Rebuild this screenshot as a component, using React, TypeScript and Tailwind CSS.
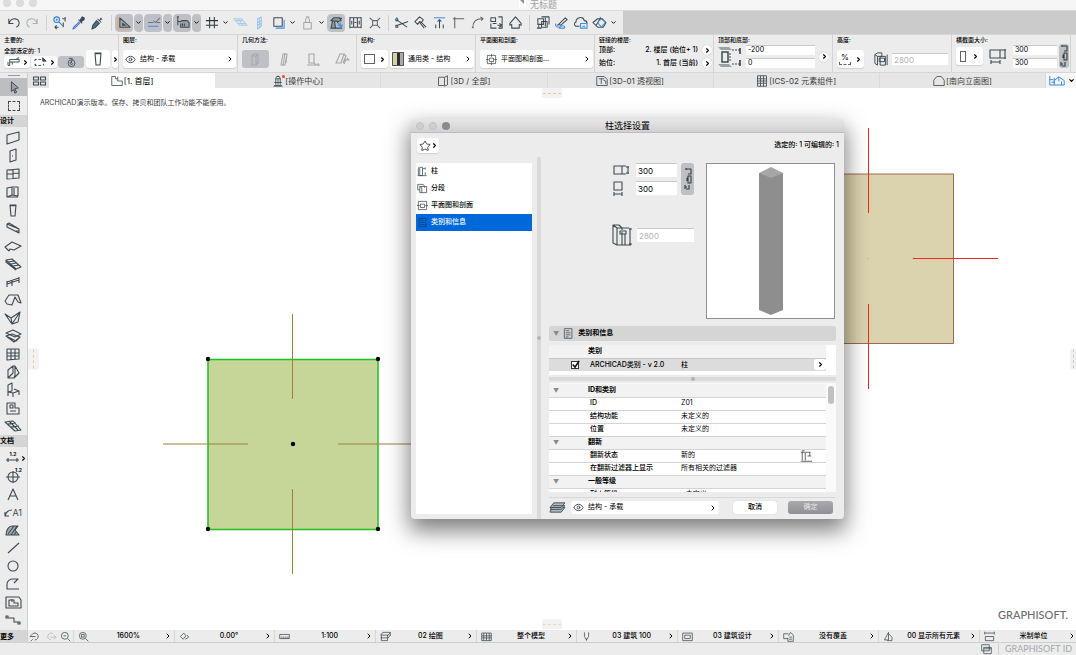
import React from 'react';
import { ChevronDown, ChevronRight, Eye, Star } from 'lucide-react';

const INK = '#3c4b53';
const BLUE = '#3b8eea';

interface GlyphProps {
  d: string;
  d2?: string;
  color?: string;
  color2?: string;
  fill?: string;
  box?: string;
  className?: string;
}

// One line drawing, with an optional second path in an accent colour
const Glyph: React.FC<GlyphProps> = ({
  d,
  d2,
  color = INK,
  color2 = BLUE,
  fill = 'none',
  box = '1 1 16 16',
  className = 'size-4',
}) => (
  <svg viewBox={box} className={`shrink-0 overflow-visible ${className}`} fill="none" strokeWidth="1.1" strokeLinejoin="round" aria-hidden="true">
    <path d={d} stroke={color} fill={fill} />
    {d2 && <path d={d2} stroke={color2} />}
  </svg>
);

const EYE = <Eye className="size-[11px] shrink-0 text-[#3f4a50]" strokeWidth={2} />;

interface PopupSelectProps {
  label: string;
  value: string;
  icon?: React.ReactNode;
  className?: string;
  centered?: boolean;
}

const PopupSelect: React.FC<PopupSelectProps> = ({ label, value, icon, className = '', centered }) => (
  <label className={`flex min-w-0 items-center ${className}`}>
    {icon}
    <select
      aria-label={label}
      className={`h-full min-w-0 flex-1 appearance-none truncate bg-transparent outline-none ${
        centered ? 'pl-1 [text-align-last:center]' : 'ml-1'
      }`}
    >
      <option>{value}</option>
    </select>
    <ChevronRight className="size-2 shrink-0" strokeWidth={3} />
  </label>
);

const NumberField: React.FC<{ label: string; value: string; className?: string; disabled?: boolean }> = ({
  label,
  value,
  className = '',
  disabled,
}) => (
  <input
    type="text"
    aria-label={label}
    defaultValue={value}
    disabled={disabled}
    className={`min-w-0 border-t border-[#c9c9c9] bg-white px-0.5 outline-none disabled:text-[#b4b4b4] ${className}`}
  />
);

interface Tool {
  name: string;
  d?: string;
  d2?: string;
  color?: string;
  color2?: string;
  fill?: string;
  pressed?: boolean;
  kind?: 'menu' | 'sep';
}

const SEP: Tool = { name: 'sep', kind: 'sep' };

const TOOLBAR: Tool[] = [
  { name: '撤销', d: 'M4 5v5h5M4 10c3-7 11-6 11 0 0 2-1 3-3 4' },
  { name: '重做', d: 'M14 5v5H9M14 10C11 3 3 4 3 10c0 2 1 3 3 4', color: '#aab0b3' },
  SEP,
  { name: '查找和选择', d: 'M4 14h4M4 14l2-2M4 14l2 2M12 5h3M15 3v5M13 9v5', d2: 'M3 6a3 3 0 1 0 6 0a3 3 0 1 0-6 0M5 6h2M6 5v2M8 8l5 5', color2: '#2f7fe0' },
  { name: '拾取参数', d: 'M9 6l4 4M11 6l2-3 2 1 0 2-3 2z', d2: 'M10 8l-6 6-1 2 2-1 6-6M5 13l5-5', color2: '#3478c9', fill: '#3c4b53' },
  { name: '注入参数', d: 'M9 5l4 4M11 7l2-2M12 4l2 2M8 7l-4 5-1 4 4-2 4-4z', d2: 'M5 13l4-4', color2: '#3478c9', fill: '#5c6a72' },
  SEP,
  { name: '辅助线', d: 'M4 4v10h11zM7 10v2h3z', d2: 'M2 3v13h12', color2: '#e0a273', fill: '#9aa2a7', pressed: true },
  { name: '辅助线选项', kind: 'menu', pressed: true },
  { name: '对齐参考线', d: 'M3 9h6M9 7l2 2 5-5M12 9h4', d2: 'M3 13h11', color: '#6b777e', pressed: true },
  { name: '对齐选项', kind: 'menu', pressed: true },
  { name: '坐标追踪', d: 'M4 3v9M4 8h3l1-1h6l2 2v5H7v-4M9 10v3M11 10v3M3 3h2', fill: '#9aa2a7', pressed: true },
  { name: '追踪选项', kind: 'menu', pressed: true },
  { name: '网格吸附', d: 'M7 3v12M12 3v12M3 7h13M3 12h13', color: '#2d373d' },
  { name: '网格选项', kind: 'menu' },
  { name: '编辑平面', d: 'M2 5l8 0 6 7-8 0zM4 7h8M6 10h8M6 5l6 7', color: '#a9cbee' },
  { name: '垂直平面', d: 'M7 5l4-2v10l-4 3zM7 9l4-2M7 12l4-2M9 4v10', color: '#9cc4f0' },
  { name: '剪切平面', d: 'M4 4h9v9H4z', d2: 'M6 15h9V6' },
  { name: '平面选项', kind: 'menu' },
  { name: '锁定', d: 'M5 9h8v7H5zM7 9V6l1-3h2l1 3v3', color: '#a2a7aa' },
  { name: '锁定选项', kind: 'menu' },
  { name: '追踪', d: 'M3 7l3-3h6l2 3-3 1zM5 7l-2 8h5l-1-7M3 15h12M9 7l2 3M12 4l3 1', d2: 'M10 12h6M13 9v6M11 10l4 4', pressed: true, fill: '#8d979c', color2: '#3b8eea' },
  { name: '测量', d: 'M3 3v12M7 4v10M11 4v10M15 3v12M3 4h12M3 14h12M8 9h2M13 7v4M5 7v4' },
  { name: '炸开', d: 'M7 7h5v5H7zM4 4l3 3M15 4l-3 3M4 15l3-3M15 15l-3-3', color: '#5c666b' },
  SEP,
  { name: '分割', d: 'M5 7l10 7M5 12l11-4M3 5h2v2H3zM3 12h2v2H3z', d2: 'M4 3v3' },
  { name: '调整', d: 'M3 8l5-5 4 3-2 3-2-1-2 3zM9 8l6 6M8 9l5 6' },
  { name: '调整高度', d: 'M9 6v9M7 8l2-2 2 2M5 11v4M13 11v4', d2: 'M3 4h12' },
  { name: '相交', d: 'M5 15V5h10M3 5l2 0M5 3v2', color: '#5c666b' },
  { name: '圆角', d: 'M4 14c0-6 4-9 10-9M3 14l2 1M12 3l3 2-2 2', color: '#5c666b' },
  { name: '改变尺寸', d: 'M3 4h5v4H3zM3 10v5h6M11 3h4v12h-4M10 12h5M12 10l3 2-3 2M5 10h4' },
  { name: '屋顶', d: 'M3 10l6-7 6 7v2l-2-1v4H5v-4l-2 1z' },
  SEP,
  { name: '组合', d: 'M4 5h6v6H4zM8 8h6v6H8zM8 3h8v8M3 15h5M12 4v9M5 12v3' },
  { name: '画笔', d: 'M6 11l7-7 2 2-7 6zM4 12l3-1', d2: 'M3 10c-2 5 5 4 6 3s5 0 3 2H6' },
  { name: '云', d: 'M8 13H4c-2-1-2-4 0-4 0-6 8-7 9-2 2 0 3 1 3 3', d2: 'M9 10h7v5H9zM11 13h3' },
  { name: '模型', d: 'M2 9l5-4 5 0 4 4-3 5-6 0zM5 13l5-9 4 3', d2: 'M7 9l4-4 4 4-4 5z' },
  { name: '更多工具', kind: 'menu' },
];

const DESIGN_TOOLS: Tool[] = [
  { name: '墙', d: 'M3 6l12-3v8L3 15z' },
  { name: '门', d: 'M6 4l6-2v11l-6 2zM8 9h1' },
  { name: '窗', d: 'M3 5l12-1v9L3 14zM9 4v10M3 9l12-1' },
  { name: '转角窗', d: 'M3 5l5-1v8l-5 2zM8 4h6v9l-6-1M10 5v7M3 14h11' },
  { name: '柱', d: 'M6 4h6l-1 11H7zM6 4c0 1 6 1 6 0' },
  { name: '梁', d: 'M3 5l12 5v4L3 8zM3 5l2-1 10 6M15 12h-3' },
  { name: '板', d: 'M1 10l7-5 9 4-7 4-4-1-1 2z' },
  { name: '楼梯', d: 'M2 5l6-1 9 8-5 2zM4 7l6-1M7 9l5-1M9 11l6-1M2 5v2l10 8' },
  { name: '栏杆', d: 'M3 9l12-4M3 11l12-4M3 8v6M8 8v5M15 4v6' },
  { name: '屋顶', d: 'M1 10l4-6h9l3 8-3-1-3-5-3 8-5-1z' },
  { name: '壳体', d: 'M1 5l6 4 9-6-2 10-6 2zM7 9l1 6 8-12' },
  { name: '天窗', d: 'M2 6l7-3 8 4-6 3zM2 9l6-2 8 3-4 4zM2 9l8 6 6-5' },
  { name: '幕墙', d: 'M3 4h12v10L3 15zM7 4v11M11 4v10M3 8h12M3 11h12' },
  { name: '变形体', d: 'M4 7l5-4 2 0 4 7-5 5-6 0zM11 3v9l-1 3M9 3v7l-5 5' },
  { name: '对象', d: 'M4 4l4-2v8l-4 1zM4 11l5 1 6-2-5-2M4 11v4M9 12v4M15 10v4' },
  { name: '区域', d: 'M3 4h8v5h4v6H3zM6 6h3v3H6zM6 12h6' },
  { name: '网面', d: 'M1 5l8-1 8 9-6 1zM4 7l8-1M7 10l8-1M5 4l9 9' },
];

const DOCUMENT_TOOLS: Tool[] = [
  { name: '线性标注', d: 'M2 11h13M4 9v4M13 9v4' },
  { name: '标高标注', d: 'M4 10a5 5 0 1 0 10 0a5 5 0 1 0-10 0M2 10h14M9 4v12' },
  { name: '文本', d: 'M4 15L9 4l5 11M6 11h6' },
  { name: '标签', d: 'M1 13c1-4 3-6 7-6M1 9v4h4' },
  { name: '填充', d: 'M2 14c0-5 3-9 6-9h6l-3 4 4 5zM4 13l6-8M7 14l6-9M10 14l2-3', fill: '#a6acb0' },
  { name: '线', d: 'M4 14L15 4' },
  { name: '圆', d: 'M4 9a5 5 0 1 0 10 0a5 5 0 1 0-10 0' },
  { name: '多段线', d: 'M15 14H3V9c0-3 3-5 6-5h5l-4 4' },
  { name: '图形', d: 'M2 4h13l2 3v8H2zM5 7h5v3h4v3H5zM8 6v3' },
  { name: '截面', d: 'M2 7h8v4h6M2 5v2h2V5zM14 11h2v2h-2z' },
];

const Toolbar = () => (
  <div role="toolbar" className="flex h-6 shrink-0 border-t border-[#dadada] bg-[#cbcbcb]">
    <div className="flex items-center bg-[#ececec] px-1">
      {TOOLBAR.map((t, i) => {
        if (t.kind === 'sep') {
          return (
            <span key={i} className="flex h-4 w-2 justify-center">
              <span className="w-px bg-[#d2d2d2]" />
            </span>
          );
        }
        const bg = t.pressed ? 'rounded-sm bg-[#bfc0c5]' : '';
        if (t.kind === 'menu') {
          return (
            <button key={i} aria-label={t.name} className={`flex h-[18px] w-[10px] items-center justify-center border-r border-transparent bg-clip-padding ${bg}`}>
              <ChevronDown className="size-[7px]" strokeWidth={3} />
            </button>
          );
        }
        return (
          <button key={i} aria-label={t.name} className={`flex h-[18px] w-[19px] items-center justify-center border-r border-transparent bg-clip-padding ${bg}`}>
            <Glyph d={t.d!} d2={t.d2} color={t.color} color2={t.color2} fill={t.fill} className="size-[15px]" />
          </button>
        );
      })}
    </div>
  </div>
);

const InfoGroup: React.FC<{ title: string; children: React.ReactNode }> = ({ title, children }) => (
  <section className="flex min-w-0 flex-col justify-between border-r border-[#d4d4d4] pt-px pr-px pb-1 pl-1">
    <h2 className="text-[6px] leading-[8px] font-medium whitespace-nowrap">{title}</h2>
    <div className="flex min-w-0 items-end gap-0.5">{children}</div>
  </section>
);

const whiteButton = 'flex items-center justify-center rounded-[3px] bg-white shadow-[0_1px_1px_#cfcfcf]';

const SmallChevron = () => <ChevronRight className="size-[7px] shrink-0" strokeWidth={4} />;

const RoundMore: React.FC<{ label: string }> = ({ label }) => (
  <button aria-label={label} className="flex size-[10px] shrink-0 items-center justify-center rounded-full bg-white shadow-[0_0_1px_#aaa]">
    <SmallChevron />
  </button>
);

const Chain: React.FC<{ className?: string }> = ({ className = '' }) => (
  <button aria-label="锁定比例" className={`flex shrink-0 items-center justify-center rounded-[3px] bg-[#bfc0c5] ${className}`}>
    <Glyph box="0 0 8 24" className="h-6 w-2" color="#333d43" d="M2 2h5v5H4M2 1v2M4 9h3v7H4zM4 11H3v3M2 22h3v-4M1 18v4M1 20h2" />
  </button>
);

const GEOMETRY = [
  { name: '垂直', d: 'M6 6l2-2h4v9l-2 2H6zM6 6h4v9M10 6l2-2' },
  { name: '倾斜', d: 'M8 4h4l-2 11H6zM12 4l-1 9M10 3l-2 13' },
  { name: '轮廓', d: 'M5 4h5v9H5zM3 15h13M14 13v3M10 13l2 2' },
  { name: '复杂', d: 'M3 13l4-9h4l-3 9zM11 4l2 2-3 7M11 10h5l-2-2M13 9l-2 5' },
];

const InfoBar = () => (
  <div className="grid h-[39px] shrink-0 grid-cols-[repeat(9,minmax(0,1fr))_5px] border-y border-[#d6d6d6] bg-[#ececec] text-[7px]">
    <InfoGroup title="主要的:">
      <div className="flex flex-col gap-px">
        <span className="text-[6px] leading-[8px] font-medium whitespace-nowrap">全部选定的: 1</span>
        <div className="flex gap-px">
          <button aria-label="图层组" className={`h-3 w-[26px] ${whiteButton}`}>
            <Glyph box="0 2 18 14" className="h-3 w-4" d="M4 6h11v3H4zM4 9v4H2v-4M12 5l3-1M7 9v3" />
            <SmallChevron />
          </button>
          <button aria-label="选择方式" className={`h-3 w-[26px] ${whiteButton}`}>
            <Glyph box="0 2 18 14" className="h-3 w-4" d="M2 6h2M6 6h3M2 6v2M2 11v2h2M6 13h3M12 13v-2M11 4l4 4h-4z" fill="#3c4b53" />
            <SmallChevron />
          </button>
          <button aria-label="旋转" className="flex h-3 w-[26px] items-center justify-center rounded-[3px] bg-[#bfc0c5]">
            <Glyph className="size-[11px]" color="#333d43" d="M4 10a5 5 0 1 0 10 0a5 5 0 1 0-10 0M5 3h5v3M9 8a2 2 0 1 0 2 2M9 6v4" />
          </button>
        </div>
      </div>
      <button aria-label="柱工具" className={`h-[18px] w-6 shrink-0 ${whiteButton}`}>
        <Glyph d="M6 3h6l-1 12H7zM6 3c0 1 6 1 6 0" />
      </button>
      <button aria-label="收藏夹" className={`h-[18px] w-[6px] shrink-0 ${whiteButton}`}>
        <SmallChevron />
      </button>
    </InfoGroup>

    <InfoGroup title="图层:">
      <PopupSelect label="图层" value="结构 - 承载" icon={EYE} className={`h-[18px] flex-1 px-[2px] ${whiteButton}`} />
    </InfoGroup>

    <InfoGroup title="几何方法:">
      {GEOMETRY.map((g, i) => (
        <button key={g.name} aria-label={g.name} className={`flex h-[18px] flex-1 items-center justify-center rounded-[3px] ${i === 0 ? 'bg-[#bfc0c5]' : ''}`}>
          <Glyph d={g.d} color="#a3a8ab" className="size-4" />
        </button>
      ))}
    </InfoGroup>

    <InfoGroup title="结构:">
      <button aria-label="截面形状" className={`h-[18px] w-[27px] shrink-0 gap-1 ${whiteButton}`}>
        <span className="h-[10px] w-[11px] border border-[#5b666c]" />
        <SmallChevron />
      </button>
      <PopupSelect
        label="建筑材料"
        value="通用类 - 结构"
        className={`h-[18px] flex-1 px-[2px] ${whiteButton}`}
        icon={
          <svg viewBox="0 0 12 14" className="h-[14px] w-3 shrink-0" aria-hidden="true">
            <path fill="#d9cfa0" d="M0 0h5v14H0z" />
            <path fill="#2a2f32" d="M5 0h3v14H5z" />
            <path fill="#a9a9a9" d="M8 0h4v14H8z" />
            <path fill="none" stroke="#555" d="M.5.5h11v13H.5z" />
          </svg>
        }
      />
    </InfoGroup>

    <InfoGroup title="平面图和剖面:">
      <PopupSelect
        label="平面图和剖面"
        value="平面图和剖面..."
        icon={<Glyph className="ml-1 size-[11px]" d="M3 3h12v12H3zM6 7h6v5H6zM9 1v4M9 13v4M1 9h4M13 9h4" />}
        className={`h-[18px] flex-1 px-[2px] ${whiteButton}`}
      />
    </InfoGroup>

    <InfoGroup title="链接的楼层:">
      <dl className="flex min-w-0 flex-1 flex-col gap-[3px] font-medium whitespace-nowrap">
        <div className="flex h-[10px] items-center">
          <dt className="flex-1">顶部:</dt>
          <dd className="flex items-center gap-1">2. 楼层 (始位+ 1)<RoundMore label="顶部楼层" /></dd>
        </div>
        <div className="flex h-[10px] items-center">
          <dt className="flex-1">始位:</dt>
          <dd className="flex items-center gap-1">1. 首层 (当前)<RoundMore label="始位楼层" /></dd>
        </div>
      </dl>
    </InfoGroup>

    <InfoGroup title="顶部和底部:">
      <div className="flex min-w-0 flex-1 items-center gap-1 pr-0.5">
        <svg viewBox="0 0 24 22" className="h-[22px] w-6 shrink-0" fill="none" aria-hidden="true">
          <path d="M0 1h11l3 3H3zM0 18h11l3 3H3z" fill="#9aa2a6" />
          <path d="M4 6h6v10H4z" stroke="#3c4b53" strokeWidth="1.5" />
          <path d="M14 4h8M14 18h8M12 7v9" stroke="#3c4b53" strokeDasharray="2 1" />
          <path d="M22 2v6M22 14v6" stroke="#2d373d" strokeWidth="1.5" />
        </svg>
        <div className="flex min-w-0 flex-1 flex-col gap-[3px]">
          <NumberField label="顶部偏移" value="-200" className="h-[10px]" />
          <NumberField label="底部偏移" value="0" className="h-[10px]" />
        </div>
        <RoundMore label="偏移选项" />
      </div>
    </InfoGroup>

    <InfoGroup title="高度:">
      <div className="flex min-w-0 flex-1 items-center gap-1 pr-0.5">
        <button aria-label="高度单位" className={`h-[18px] w-[27px] shrink-0 gap-1 ${whiteButton}`}>
          <span className="flex flex-col items-center text-[8px] leading-[9px]">
            %
            <span className="h-[3px] w-3 border-x border-b border-dashed border-[#5b666c]" />
          </span>
          <SmallChevron />
        </button>
        <Glyph className="ml-[6px] size-[14px]" d="M2 4l3-2h5v4M2 4v10l3 2V6zM5 6h5M8 6h6v10H8zM7 8h6v4H7zM16 4v12" />
        <NumberField label="高度" value="2800" disabled className="h-3 flex-1 text-[8px]" />
      </div>
    </InfoGroup>

    <InfoGroup title="横截面大小:">
      <div className="flex min-w-0 flex-1 items-center gap-0.5">
        <button aria-label="横截面" className={`h-[18px] w-[27px] shrink-0 gap-[6px] ${whiteButton}`}>
          <span className="h-[11px] w-[6px] border border-[#5b666c]" />
          <SmallChevron />
        </button>
        <Glyph className="mx-[5px] size-4" d="M1 3h10v8H1zM11 3h6M11 11h6M16 2v10M2 15h9M2 13v4M11 13v4" />
        <div className="flex min-w-0 flex-1 flex-col gap-[3px]">
          <NumberField label="宽度" value="300" className="h-[10px]" />
          <NumberField label="深度" value="300" className="h-[10px]" />
        </div>
        <Chain className="h-6 w-[10px]" />
      </div>
    </InfoGroup>
  </div>
);

const ToolButton: React.FC<{ tool: Tool }> = ({ tool }) => (
  <button aria-label={tool.name} className="relative flex h-[18px] w-full items-center justify-center pr-px">
    <Glyph d={tool.d!} fill={tool.fill} />
    {tool.name === '线性标注' && (
      <>
        <span className="absolute top-0.5 text-[5px] leading-[6px] font-bold">1.2</span>
        <ChevronRight className="absolute right-0 size-[7px]" strokeWidth={4} />
      </>
    )}
    {tool.name === '标高标注' && <span className="absolute top-0 right-[5px] text-[5px] leading-[6px] font-bold">1.2</span>}
    {tool.name === '标签' && <span className="absolute right-[5px] text-[9px] leading-[9px] font-normal text-[#3c4b53]">A1</span>}
  </button>
);

const Toolbox = () => (
  <nav aria-label="工具箱" className="flex w-7 shrink-0 flex-col border-r border-[#cfcfcf] bg-[#ececec] text-[7px] font-bold">
    <div className="flex h-[5px] justify-center pt-0.5">
      <span className="h-px w-3 bg-[#9a9a9a]" />
    </div>
    <button aria-label="箭头" className="flex h-[18px] items-center justify-center bg-[#bdbec2]">
      <Glyph d="M6 3l8 7-4 1 2 4-2 1-1-4-3 2z" fill="#9ba2a6" className="size-[14px]" />
    </button>
    <button aria-label="选取框" className="flex h-[19px] items-center justify-center">
      <span className="h-[10px] w-3 border border-dashed border-[#3f4a50]" />
    </button>
    <h3 className="h-3 bg-[#d5d5d5] leading-3">设计</h3>
    <div className="flex flex-col pt-0.5">
      {DESIGN_TOOLS.map((t) => <ToolButton key={t.name} tool={t} />)}
    </div>
    <h3 className="h-3 bg-[#d5d5d5] leading-3">文档</h3>
    <div className="flex flex-1 flex-col pt-0.5">
      {DOCUMENT_TOOLS.map((t) => <ToolButton key={t.name} tool={t} />)}
    </div>
    <button className="h-[13px] bg-[#d5d5d5] text-left leading-3">更多</button>
  </nav>
);

const TABS = [
  { title: '[1. 首层]', d: 'M2 3h5v3h3v3h6v6H2zM10 3v3' },
  { title: '[操作中心]', d: 'M6 5l3-3 3 3M5 6h8M6 6v8M12 6v8M9 6v8M4 15h10M4 11h10M7 3h4M3 16h12' },
  { title: '[3D / 全部]', d: 'M3 4h8v11H3zM11 4l4-2v12l-4 2' },
  { title: '[3D-01 透视图]', d: 'M2 3h10l4 4v8H2zM5 6h7M8 6v7M11 8l3 1v4' },
  { title: '[ICS-02 元素组件]', d: 'M3 2h12v14H3zM7 2v14M11 2v14M3 6h12M3 9h12M3 12h12' },
  { title: '[南向立面图]', d: 'M2 8l4-5h6l4 5v7H2z' },
];

const TabBar = () => (
  <div className="grid h-[15px] shrink-0 grid-cols-[21px_repeat(6,minmax(0,1fr))_30px] bg-[#e6e6e6] text-[8px]">
    <button aria-label="标签概览" className="flex items-center justify-center">
      <Glyph box="0 0 14 12" className="h-3 w-[14px]" d="M1.5 2h5v3h-5zM8.5 2h5v3h-5zM1.500 7h5v3h-5zM8.500 7h5v3h-5z" />
    </button>
    {TABS.map((tab, i) => (
      <button
        key={tab.title}
        className={`flex items-center justify-center gap-px whitespace-nowrap ${i === 0 ? 'bg-white' : 'border-r border-[#dadada] text-[#3a3a3a]'}`}
      >
        <span className="relative">
          <Glyph d={tab.d} className="size-3" />
          {i === 1 && <span className="absolute top-0 -right-px size-[3px] rounded-full bg-[#ff3b1f]" />}
        </span>
        {tab.title}
      </button>
    ))}
    <button aria-label="视图" className="flex items-center justify-center gap-0.5 bg-[#f6f6f6]">
      <Glyph box="0 0 20 14" className="h-[13px] w-[18px]" color={BLUE} d="M2 2v10h5M2 6h4M4 9h3V4M7 12V7l5-4 6 4v5M12 3v5M15 12V8M7 12h11" />
      <ChevronDown className="size-[7px]" strokeWidth={4} />
    </button>
  </div>
);

const PlanDrawing = () => (
  <svg className="h-full w-full" aria-label="平面图">
    <rect x="755.5" y="86" width="170" height="169.500" fill="#dbd3ae" stroke="#8d4a32" strokeWidth="0.8" />
    <path d="M840.5 40v85M840.5 216v85M885 170.500h85" stroke="#f0281e" />
    <path d="M839 170.500h2" stroke="#c4bd98" />
    <rect x="180" y="271.500" width="170" height="170" fill="#c5d698" stroke="#1fc01f" strokeWidth="1.5" />
    <path d="M264.500 226v85M264.500 401v85M135 356h85M310 356h85" stroke="#9a8238" />
    {[[180, 271], [350, 271], [180, 441], [350, 441], [265, 356]].map(([cx, cy]) => (
      <circle key={`${cx}-${cy}`} cx={cx} cy={cy} r="2.200" fill="#000" />
    ))}
  </svg>
);

const DIALOG_PAGES = [
  { title: '柱', d: 'M5 3h4v12H5zM3 3v12M2 15h13M9 5h4M13 3v3M13 10v4' },
  { title: '分段', d: 'M2 3h8l2 3v2M2 3v8h3M5 6h10v9H5zM5 6l3 2v7' },
  { title: '平面图和剖面', d: 'M3 3h12v12H3zM6 7h6v5H6zM1 9h4M13 9h4' },
  { title: '类别和信息', d: 'M4 3h10v12H4zM6 6h4M6 9h6M6 12h6' },
];

interface PropertyRow {
  label: string;
  value?: string;
  header?: boolean;
}

const PROPERTIES: PropertyRow[] = [
  { label: 'ID和类别', header: true },
  { label: 'ID', value: 'Z01' },
  { label: '结构功能', value: '未定义的' },
  { label: '位置', value: '未定义的' },
  { label: '翻新', header: true },
  { label: '翻新状态', value: '新的' },
  { label: '在翻新过滤器上显示', value: '所有相关的过滤器' },
  { label: '一般等级', header: true },
  { label: '耐火等级', value: '<未定义>' },
];

const ClassTable = () => (
  <table className="w-full table-fixed border-collapse">
    <colgroup>
      <col className="w-[39px]" />
      <col className="w-[93px]" />
      <col />
    </colgroup>
    <tbody>
      <tr className="h-[13px] bg-[#f2f2f2]">
        <td />
        <th scope="colgroup" colSpan={2} className="text-left font-bold">类别</th>
      </tr>
      <tr className="h-[13px] border-t border-[#c8c8c8] bg-[#dcdcdc] font-medium">
        <td className="pl-[22px]">
          <span className="relative block size-2">
            <input type="checkbox" defaultChecked aria-label="ARCHICAD类别 - v 2.0" className="peer block size-2 appearance-none border border-[#333] bg-white" />
            <svg viewBox="0 0 10 10" className="pointer-events-none absolute -top-px left-0 hidden size-[9px] peer-checked:block" aria-hidden="true">
              <path d="M2 5l2.500 3L9 1" fill="none" stroke="#111" strokeWidth="1.800" />
            </svg>
          </span>
        </td>
        <td className="pl-0.5 whitespace-nowrap">ARCHICAD类别 - v 2.0</td>
        <td>
          <div className="flex items-center justify-between">
            柱
            <button aria-label="选择类别" className="flex h-[11px] w-3 items-center justify-center rounded-[3px] bg-white">
              <SmallChevron />
            </button>
          </div>
        </td>
      </tr>
    </tbody>
  </table>
);

const PropertyTable = () => (
  <table className="w-full table-fixed border-collapse">
    <colgroup>
      <col className="w-[39px]" />
      <col className="w-[93px]" />
      <col />
    </colgroup>
    <tbody>
      {PROPERTIES.map((row) =>
        row.header ? (
          <tr key={row.label} className="h-[13px] border-b border-[#d4d4d4] bg-[#f2f2f2]">
            <td className="pl-1 text-[6px] text-[#8a8a8a]">▼</td>
            <th scope="colgroup" colSpan={2} className="text-left font-bold">{row.label}</th>
          </tr>
        ) : (
          <tr key={row.label} className="h-[13px] border-b border-[#d4d4d4] bg-white">
            <td className="pl-[22px]">
              {row.label === '耐火等级' && <Glyph box="0 0 10 8" className="h-2 w-[10px]" d="M1 2h3v4H1zM4 4h2M6 2h3v4H6z" />}
            </td>
            <th scope="row" className="pl-0.5 text-left font-medium whitespace-nowrap">{row.label}</th>
            <td className="whitespace-nowrap">
              <div className="flex h-3 items-center justify-between pr-[14px]">
                {row.value}
                {row.label === '翻新状态' && <Glyph d="M4 3v12M8 5v10M2 4h13M14 4v5M11 9h5M2 16h15M4 2h3" className="size-3" />}
              </div>
            </td>
          </tr>
        )
      )}
    </tbody>
  </table>
);

const ColumnPreview = () => (
  <div className="flex h-[156px] w-[129px] shrink-0 items-center justify-center border border-[#8f8f8f] bg-white">
    <svg viewBox="0 0 24 148" className="h-[148px] w-6" aria-label="柱预览">
      <path d="M0 6v137l12 5 12-5V6z" fill="#8e8e8e" />
      <path d="M0 6l12-6 12 6-12 5z" fill="#a6a6a6" />
    </svg>
  </div>
);

const ColumnDialog = () => (
  <div
    role="dialog"
    aria-label="柱选择设置"
    className="absolute top-[31px] left-[383px] flex w-[433px] flex-col overflow-hidden rounded-[4px] bg-[#ececec] text-[7px] shadow-[0_10px_22px_2px_rgba(0,0,0,0.5)]"
  >
    <header className="relative flex h-[14px] shrink-0 items-center gap-[5px] border-b border-[#bdbdbd] bg-linear-to-b from-[#e8e6e8] to-[#d3d0d3] px-[5px]">
      <button aria-label="关闭" className="size-2 rounded-full border border-[#c2c0c2] bg-[#d0ced0]" />
      <button aria-label="最小化" className="size-2 rounded-full border border-[#c2c0c2] bg-[#d0ced0]" />
      <button aria-label="缩放" className="size-2 rounded-full bg-[#8c8a8e]" />
      <h2 className="absolute inset-x-0 text-center text-[9px] leading-[14px]">柱选择设置</h2>
    </header>

    <div className="flex items-center justify-between pt-[5px] pr-[5px] pb-1 pl-[6px]">
      <button aria-label="收藏夹" className={`h-[15px] w-[22px] ${whiteButton}`}>
        <Star className="size-3 text-[#3f4a50]" strokeWidth={2} />
        <SmallChevron />
      </button>
      <p className="font-medium">选定的: 1 可编辑的: 1</p>
    </div>

    <div className="flex">
      <ul className="mt-[6px] mb-[5px] ml-[5px] w-[116px] shrink-0 bg-white">
        {DIALOG_PAGES.map((page, i) => {
          const active = i === 3;
          return (
            <li key={page.title}>
              <button className={`flex h-[17px] w-full items-center gap-[3px] px-px font-medium ${active ? 'bg-[#0068da] text-white' : ''}`}>
                <Glyph d={page.d} color={active ? '#12396b' : INK} className="size-[11px]" />
                {page.title}
              </button>
            </li>
          );
        })}
      </ul>

      <div className="ml-[5px] flex w-1 shrink-0 items-center justify-center bg-[#dadada]">
        <span className="size-1 rounded-full bg-[#b5b5b5]" />
      </div>

      <div className="flex min-w-0 flex-1 flex-col pt-[6px] pr-2 pl-2">
        <div className="flex justify-end gap-3 pr-px">
          <div className="flex flex-col gap-7">
            <div className="flex items-start justify-end gap-1">
              <div className="flex flex-col gap-1">
                <div className="flex items-center gap-[6px]">
                  <Glyph box="0 0 18 14" className="h-[14px] w-[18px]" d="M2 3h8v8H2zM10 3h4M10 11h4M16 3v8M14 4h3M14 10h3" />
                  <NumberField label="宽度" value="300" className="h-[14px] w-[41px] text-[8px]" />
                </div>
                <div className="flex items-center gap-[6px]">
                  <Glyph box="0 0 18 14" className="h-[14px] w-[18px]" d="M2 1h8v8H2zM2 13h8M2 11v4M10 11v4" />
                  <NumberField label="深度" value="300" className="h-[14px] w-[41px] text-[8px]" />
                </div>
              </div>
              <Chain className="h-8 w-[13px]" />
            </div>
            <div className="flex items-center gap-1">
              <Glyph box="0 0 22 24" className="h-6 w-[22px]" d="M2 2h6l3 3v2M2 2v18l4 2V5zM6 5h5M6 22h5V9M9 8h6v3H9zM11 5h7M14 11v11M11 22h9M19 5v17M18 6h3M18 21h3" />
              <NumberField label="高度" value="2800" disabled className="h-[14px] w-[57px] text-[8px]" />
            </div>
          </div>
          <ColumnPreview />
        </div>

        <button className="mt-[7px] flex h-[15px] items-center gap-1 rounded-xs bg-[#d5d5d5] px-1 text-left font-bold">
          <span className="text-[6px] text-[#8a8a8a]">▼</span>
          <Glyph d="M3 2h11v14H3zM5 5h5M5 8h7M5 11h7M5 14h4" className="size-[11px]" />
          类别和信息
        </button>

        <div className="mt-1 h-[30px] overflow-hidden bg-white pr-[10px]">
          <ClassTable />
        </div>
        <div className="mt-0.5 flex h-1 items-center justify-center bg-[#dadada]">
          <span className="size-1 rounded-full bg-[#b0b0b0]" />
        </div>
        <div className="mt-0.5 flex h-[109px] overflow-hidden bg-[#fafafa] pt-px">
          <div className="min-w-0 flex-1">
            <PropertyTable />
          </div>
          <div className="w-[10px] shrink-0 px-[2px] pt-0.5">
            <div className="h-[18px] rounded-full bg-[#c1c1c1]" />
          </div>
        </div>

        <div className="mt-[5px] flex items-center border-t border-[#d8d8d8] pt-[3px] pb-[5px]">
          <svg viewBox="0 0 18 14" className="h-[13px] w-[17px] shrink-0" fill="#b4bbbf" stroke="#3c4b53" strokeLinejoin="round" aria-hidden="true">
            <path d="M1 11l4-4h12l-4 5H1z" />
            <path d="M1 9l4-4h12l-4 4z" />
            <path d="M1 7l4-5h12l-4 5zM4 5h10" />
          </svg>
          <PopupSelect label="图层" value="结构 - 承载" icon={EYE} className="ml-[5px] h-[13px] w-[148px] rounded-[3px] bg-white px-[2px]" />
          <div className="flex flex-1 justify-end gap-[11px] pr-[3px]">
            <button className="h-[13px] w-11 rounded-[3px] bg-white font-medium shadow-[0_0_1px_#bbb]">取消</button>
            <button className="h-[13px] w-[45px] rounded-[3px] bg-linear-to-b from-[#a9a9ae] to-[#8f8f95] text-[#e6e6e8]">确定</button>
          </div>
        </div>
      </div>
    </div>
  </div>
);

const Canvas = () => (
  <main className="relative min-h-0 flex-1 overflow-hidden bg-white">
    <PlanDrawing />
    <p className="absolute top-[9px] left-3 text-[7px] leading-[12px] text-[#3a3a3a]">
      ARCHICAD演示版本。保存、拷贝和团队工作功能不能使用。
    </p>
    <span className="absolute top-0 left-1/2 flex h-[10px] w-5 -translate-x-1/2 items-center rounded-b-xs bg-[#f2f2f2] px-px">
      <span className="w-full border-t border-dashed border-[#f0c9a4]" />
    </span>
    <span className="absolute bottom-px left-1/2 flex h-[10px] w-5 -translate-x-1/2 items-center rounded-t-xs bg-[#f2f2f2] px-px">
      <span className="w-full border-t border-dashed border-[#eadcc0]" />
    </span>
    <span className="absolute top-1/2 left-0 flex h-[21px] w-[11px] -translate-y-1/2 justify-center rounded-r-xs bg-[#f2f2f2] py-px">
      <span className="border-l border-dashed border-[#f0c9a4]" />
    </span>
    <span className="absolute top-1/2 right-0 flex h-[21px] w-[6px] -translate-y-1/2 justify-center rounded-l-xs bg-[#f2f2f2] py-px">
      <span className="border-l border-dashed border-[#c9c9c9]" />
    </span>
    <p className="absolute right-2 bottom-2 font-[Lato] text-[11px] leading-[14px] font-medium text-[#6d6d6d]">GRAPHISOFT.</p>
    <ColumnDialog />
  </main>
);

const STATUS = [
  { label: '缩放', value: '1600%', d: 'M3 8a5 5 0 1 0 10 0a5 5 0 1 0-10 0M12 12l4 4M6 6h4v4H6z' },
  { label: '方向', value: '0.00°', d: 'M3 9l5-5 3 4-4 5zM10 13l5-3-2-3' },
  { label: '比例', value: '1:100', d: 'M2 6h14v6H2zM5 9v3M8 9v3M11 9v3M14 9v3' },
  { label: '图层组合', value: '02 绘图', d: 'M5 3h11l-3 4H2zM2 11h11l3-4M3 7v8h9V7M16 3v5' },
  { label: '结构显示', value: '整个模型', d: 'M2 4h14v11H2zM2 8h14M2 11h14M5 4v11M9 4v11M13 4v11' },
  { label: '画笔集', value: '03 建筑 100', d: 'M6 3v6l3 5 3-5V3M9 12v3' },
  { label: '模型视图', value: '03 建筑设计', d: 'M2 4h14v11H2zM5 7h8v5H5z' },
  { label: '图形覆盖', value: '没有覆盖', d: 'M9 5H2v7h6M9 8l3-5 4 4v9H8v-5M10 10h4M10 13h4' },
  { label: '翻新过滤器', value: '00 显示所有元素', d: 'M3 14l6-11v11zM9 5l5 5v5H7' },
  { label: '单位', value: '米制单位', d: 'M2 4h14M2 2v4M16 2v4M3 9h12v6H3z' },
];

const ZOOM_TOOLS = [
  { name: '上一缩放', d: 'M5 5a5 5 0 1 1 3 9M1 9h8M5 5L1 9M5 13l-3 3', color: INK },
  { name: '下一缩放', d: 'M13 5a5 5 0 1 0-3 9M17 10H9M14 7l3 3-3 3', color: '#b3b8bb' },
  { name: '缩小', d: 'M3 8a5 5 0 1 0 10 0a5 5 0 1 0-10 0M12 12l4 4M6 8h4', color: INK },
];

const StatusBar = () => (
  <div className="flex h-[13px] shrink-0 border-b border-[#cdcdcd] bg-[#ececec] text-[7px] font-medium">
    <div className="flex w-[46px] shrink-0 items-center justify-around border-r border-[#d6d6d6]">
      {ZOOM_TOOLS.map((z) => (
        <button key={z.name} aria-label={z.name}>
          <Glyph d={z.d} color={z.color} className="size-[11px]" />
        </button>
      ))}
    </div>
    <div className="grid min-w-0 flex-1 grid-cols-[repeat(9,minmax(0,1fr))_96px]">
      {STATUS.map((s) => (
        <PopupSelect
          key={s.label}
          label={s.label}
          value={s.value}
          centered
          icon={<Glyph d={s.d} className="size-[11px]" />}
          className="border-r border-[#d6d6d6] pr-0.5 pl-1 last:border-0 last:pr-0"
        />
      ))}
    </div>
  </div>
);

export default function App() {
  return (
    <div className="flex h-screen flex-col overflow-hidden bg-[#ececec] font-[Inter,'Noto_Sans_CJK_SC',sans-serif] text-black">
      <header className="relative flex h-[10px] shrink-0 justify-center bg-[#f6f6f6]">
        <div className="absolute -top-px left-[3px] flex gap-[5px]">
          <button aria-label="关闭窗口" className="size-2 rounded-full bg-[#dcdcdc]" />
          <button aria-label="最小化窗口" className="size-2 rounded-full bg-[#dcdcdc]" />
          <button aria-label="缩放窗口" className="size-2 rounded-full bg-[#dcdcdc]" />
        </div>
        <h1 className="flex h-[10px] gap-1 text-[9px] leading-[10px] text-[#a0a0a0]">
          <svg viewBox="0 0 7 8" className="h-2 w-[7px]" aria-hidden="true">
            <path d="M0 0h7v8H0z" fill="#fff" />
            <path d="M1 0l4 4V0z" fill="#7c8fc4" />
          </svg>
          无标题
        </h1>
      </header>
      <Toolbar />
      <InfoBar />
      <div className="flex min-h-0 flex-1">
        <Toolbox />
        <div className="flex min-w-0 flex-1 flex-col">
          <TabBar />
          <Canvas />
          <StatusBar />
        </div>
      </div>
      <footer className="flex h-3 shrink-0 items-center justify-end gap-[6px] pr-1 font-[Lato] text-[9px] leading-3 text-[#a3a8ab]">
        <Glyph d="M2 2h11v9H2zM5 6h11v9H5zM5 8h11" className="size-[11px]" />
        <span className="h-[10px] w-px bg-[#cfcfcf]" />
        GRAPHISOFT ID
      </footer>
    </div>
  );
}
